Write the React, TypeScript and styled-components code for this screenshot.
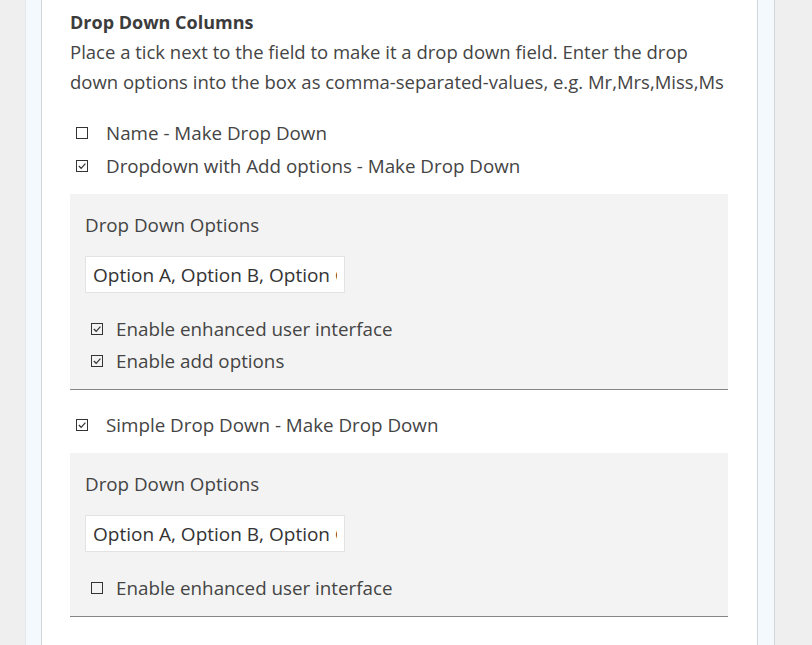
import React from "react";
import styled, { createGlobalStyle } from "styled-components";

const Global = createGlobalStyle`
  html, body { margin: 0; padding: 0; height: 100%; }
  body { background: #efeff0; font-family: "Open Sans", "Noto Sans", sans-serif; color: #444; overflow: hidden; }
`;

const Page = styled.div`
  display: flex;
  height: 645px;
  background: #efeff0;
  padding-left: 25px;
`;

const Frame = styled.div`
  display: flex;
  width: 750px;
  background: #f3f9fd;
  border-left: 1px solid #e2e9ee;
  border-right: 1px solid #cfd6db;
  padding: 0 16px 0 15px;
  box-sizing: border-box;
`;

const Content = styled.div`
  flex: 1;
  background: #fff;
  border-left: 1px solid #cfd6db;
  border-right: 1px solid #cfd6db;
  padding: 9px 29px 0 28px;
  overflow: hidden;
`;

const Title = styled.h3`
  margin: 0;
  font-size: 18px;
  font-weight: 700;
  line-height: 26px;
  color: #3c3c3c;
`;

const Desc = styled.p`
  margin: 2px 0 20px;
  font-size: 18.5px;
  line-height: 29.5px;
  color: #444;
`;

const Row = styled.label<{ $indent?: boolean }>`
  display: flex;
  align-items: center;
  padding-left: 6px;
  height: ${(p) => (p.$indent ? "32px" : "33px")};
  font-size: 18.8px;
  color: #444;
  gap: ${(p) => (p.$indent ? "13px" : "18px")};
`;

const Box = styled.span`
  width: 12px;
  height: 12px;
  box-sizing: border-box;
  border: 1px solid #333;
  display: inline-flex;
  align-items: center;
  justify-content: center;
  flex-shrink: 0;
`;

const Panel = styled.div`
  background: #f3f3f3;
  border-bottom: 1px solid #858585;
  padding: 14px 15px 12px;
  margin: 12px 0 18px;
`;

const PanelLabel = styled.div`
  font-size: 18.8px;
  line-height: 34px;
  color: #444;
  margin-bottom: 14px;
`;

const Input = styled.input`
  display: block;
  width: 260px;
  height: 37px;
  box-sizing: border-box;
  border: 1px solid #e3e3e3;
  background: #fff;
  font-family: "Open Sans", "Noto Sans", sans-serif;
  font-size: 19px;
  color: #333;
  padding: 0 7px;
  margin-bottom: 20px;
  outline: none;
`;

const Check = ({ checked }: { checked: boolean }) => (
  <Box>
    {checked && (
      <svg width="10" height="10" viewBox="0 0 10 10">
        <path d="M1.8 5 L4.2 7.3 L8.4 2.6" fill="none" stroke="#333" strokeWidth="1.2" />
      </svg>
    )}
  </Box>
);

export default function App() {
  return (
    <>
      <Global />
      <Page>
        <Frame>
          <Content>
            <Title>Drop Down Columns</Title>
            <Desc>
              Place a tick next to the field to make it a drop down field. Enter the drop down options into the box as
              comma-separated-values, e.g. Mr,Mrs,Miss,Ms
            </Desc>
            <Row>
              <Check checked={false} />
              Name - Make Drop Down
            </Row>
            <Row>
              <Check checked />
              Dropdown with Add options - Make Drop Down
            </Row>
            <Panel>
              <PanelLabel>Drop Down Options</PanelLabel>
              <Input readOnly value="Option A, Option B, Option C" />
              <Row $indent>
                <Check checked />
                Enable enhanced user interface
              </Row>
              <Row $indent>
                <Check checked />
                Enable add options
              </Row>
            </Panel>
            <Row>
              <Check checked />
              Simple Drop Down - Make Drop Down
            </Row>
            <Panel>
              <PanelLabel>Drop Down Options</PanelLabel>
              <Input readOnly value="Option A, Option B, Option C" />
              <Row $indent>
                <Check checked={false} />
                Enable enhanced user interface
              </Row>
            </Panel>
          </Content>
        </Frame>
      </Page>
    </>
  );
}
